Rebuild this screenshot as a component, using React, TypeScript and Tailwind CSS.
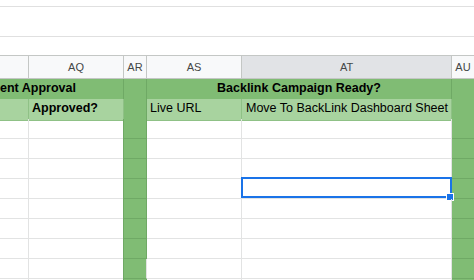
import React from "react";

const cols = "grid-cols-[29px_95px_23px_95px_210px_22px]";

function HeaderCell({ label, active, last }: { label: string; active?: boolean; last?: boolean }) {
  return (
    <div
      className={`h-[22px] flex items-center justify-center text-[11px] text-[#444746] ${
        active ? "bg-[#e1e3e6]" : "bg-[#f8f9fa]"
      } ${last ? "" : "border-r border-[#c4c7c5]"}`}
    >
      {label}
    </div>
  );
}

export default function App() {
  const whiteRows = Array.from({ length: 9 });
  return (
    <div className="w-[474px] h-[280px] overflow-hidden bg-white font-['Liberation_Sans',Arial,sans-serif]">
      {/* toolbar area */}
      <div className="h-[55px] flex flex-col">
        <div className="h-[6px]" />
        <div className="h-px bg-[#e0e0e0]" />
        <div className="h-[29px]" />
        <div className="h-px bg-[#e0e0e0]" />
      </div>

      {/* column headers */}
      <div className={`grid ${cols} border-y border-[#c4c7c5]`}>
        <HeaderCell label="" />
        <HeaderCell label="AQ" />
        <HeaderCell label="AR" />
        <HeaderCell label="AS" />
        <HeaderCell label="AT" active />
        <HeaderCell label="AU" last />
      </div>

      {/* row 1 */}
      <div className={`grid ${cols} h-[20px] text-[12.5px] font-bold text-black`}>
        <div className="col-span-2 bg-[#80bc74] border-r border-b border-[#6fa965] flex items-end pb-[2px] overflow-hidden whitespace-nowrap">
          <span>ent Approval</span>
        </div>
        <div className="bg-[#80bc74] border-r border-b border-[#6fa965]" />
        <div className="col-span-2 bg-[#80bc74] border-r border-b border-[#6fa965] flex items-end justify-center pb-[2px] whitespace-nowrap">
          Backlink Campaign Ready?
        </div>
        <div className="bg-[#80bc74] border-b border-[#6fa965]" />
      </div>

      {/* row 2 */}
      <div className={`grid ${cols} h-[20px] text-[12.5px] text-black`}>
        <div className="bg-[#a8d39f] border-r border-b border-[#8fc186]" />
        <div className="bg-[#a8d39f] border-r border-b border-[#8fc186] font-bold flex items-end pb-[2px] pl-[3px] whitespace-nowrap">
          Approved?
        </div>
        <div className="bg-[#80bc74] border-r border-b border-[#6fa965]" />
        <div className="bg-[#a8d39f] border-r border-b border-[#8fc186] flex items-end pb-[2px] pl-[3px] whitespace-nowrap">
          Live URL
        </div>
        <div className="bg-[#a8d39f] border-r border-b border-[#8fc186] flex items-end pb-[2px] pl-[4px] whitespace-nowrap overflow-hidden">
          Move To BackLink Dashboard Sheet
        </div>
        <div className="bg-[#80bc74] border-b border-[#6fa965]" />
      </div>

      {/* empty rows */}
      {whiteRows.map((_, i) => (
        <div key={i} className={`grid ${cols} h-[20px]`}>
          <div className="border-r border-b border-[#e2e3e3]" />
          <div className="border-r border-b border-[#e2e3e3]" />
          <div
            className={`bg-[#80bc74] border-r border-b border-l border-l-[#6fa965] ${
              i === 7 ? "border-r-[#e2e3e3]" : "border-r-[#6fa965]"
            } border-b-[#6fa965] -ml-px`}
          />
          <div className="border-r border-b border-[#e2e3e3]" />
          <div className="relative border-r border-b border-[#e2e3e3]">
            {i === 3 && (
              <>
                <div className="absolute -left-px -top-[2px] -right-px -bottom-0 border-2 border-[#1a73e8]" />
                <div className="absolute -right-[3px] -bottom-[3px] w-[6px] h-[6px] bg-[#1a73e8] border border-white box-content" />
              </>
            )}
          </div>
          <div className="bg-[#80bc74] border-b border-l border-[#6fa965] -ml-px" />
        </div>
      ))}
    </div>
  );
}
